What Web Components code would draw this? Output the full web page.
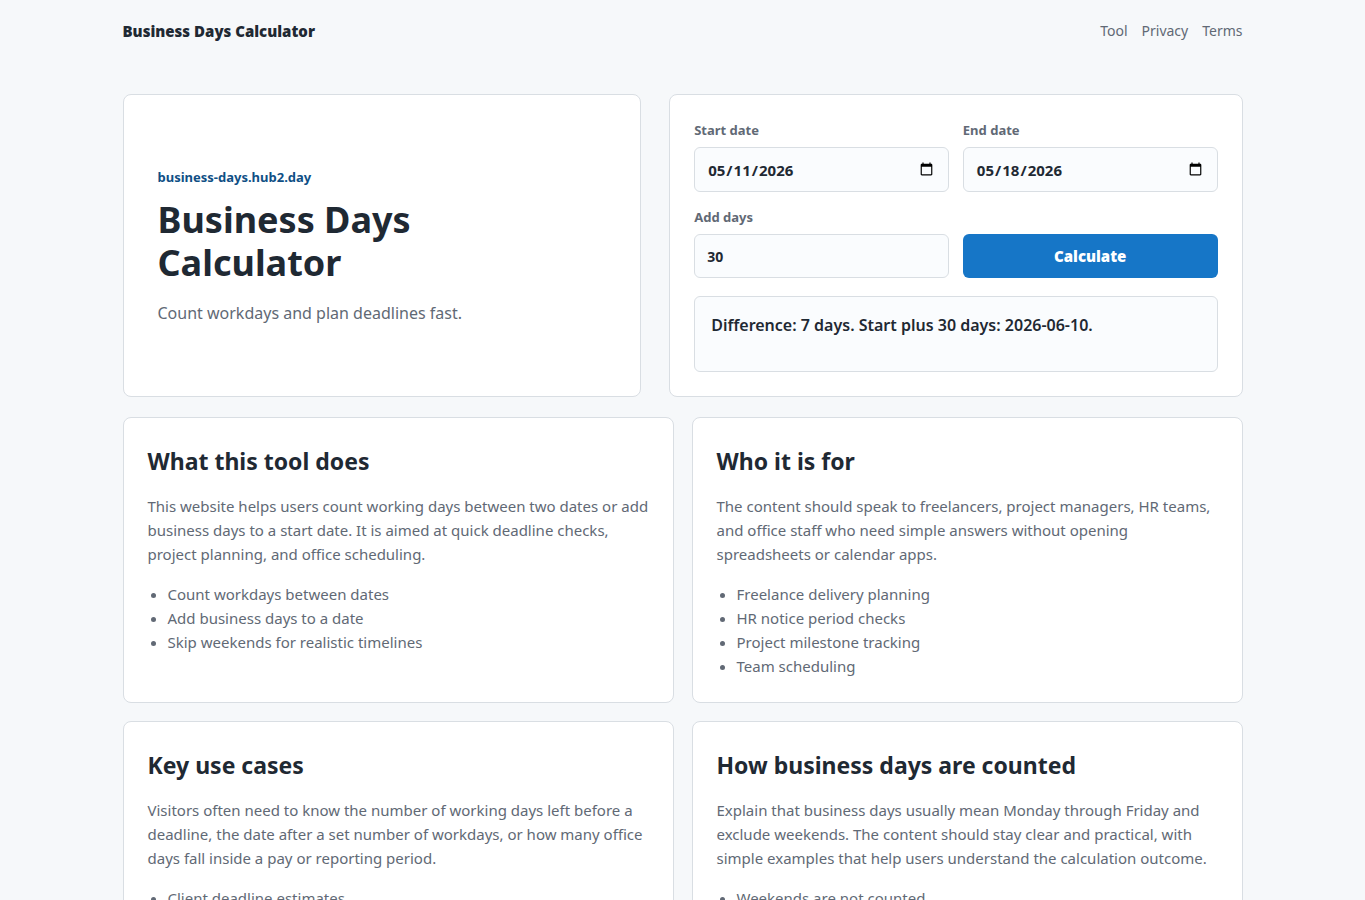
<!DOCTYPE html>
<html lang="en">
<head>
<meta charset="utf-8">
<meta name="viewport" content="width=device-width, initial-scale=1">
<title>Business Days Calculator</title>
<style>
  :root {
    --ink: #1f2933;
    --muted: #616975;
    --line: #d9dee3;
    --page: #f6f8fa;
    --field: #fafcfe;
    --accent: #1676c7;
    --accent-dark: #0f4f85;
  }
  body {
    margin: 0;
    background: var(--page);
    color: var(--ink);
    font: 15px/24px "Noto Sans", "Open Sans", sans-serif;
  }
</style>
</head>
<body>
<calc-page></calc-page>

<template id="calc-page">
  <style>
    :host { display: block; }
    main { width: min(1120px, 100% - 32px); margin: 0 auto; padding: 32px 0 48px; }
    .hero { display: grid; grid-template-columns: 19fr 21fr; gap: 28px; margin-bottom: 20px; }
    .sections { display: grid; grid-template-columns: 1fr 1fr; gap: 18px; }
    @media (max-width: 800px) {
      .hero, .sections { grid-template-columns: 1fr; }
    }
  </style>
  <site-header></site-header>
  <main>
    <div class="hero">
      <hero-card>
        <span slot="eyebrow">business-days.hub2.day</span>
        <span slot="title">Business Days Calculator</span>
        <span slot="lead">Count workdays and plan deadlines fast.</span>
      </hero-card>
      <days-form></days-form>
    </div>
    <div class="sections">
      <info-card>
        <span slot="title">What this tool does</span>
        <span slot="text">This website helps users count working days between two dates or add business days to a start date. It is aimed at quick deadline checks, project planning, and office scheduling.</span>
        <li>Count workdays between dates</li>
        <li>Add business days to a date</li>
        <li>Skip weekends for realistic timelines</li>
      </info-card>
      <info-card>
        <span slot="title">Who it is for</span>
        <span slot="text">The content should speak to freelancers, project managers, HR teams, and office staff who need simple answers without opening spreadsheets or calendar apps.</span>
        <li>Freelance delivery planning</li>
        <li>HR notice period checks</li>
        <li>Project milestone tracking</li>
        <li>Team scheduling</li>
      </info-card>
      <info-card>
        <span slot="title">Key use cases</span>
        <span slot="text">Visitors often need to know the number of working days left before a deadline, the date after a set number of workdays, or how many office days fall inside a pay or reporting period.</span>
        <li>Client deadline estimates</li>
      </info-card>
      <info-card>
        <span slot="title">How business days are counted</span>
        <span slot="text">Explain that business days usually mean Monday through Friday and exclude weekends. The content should stay clear and practical, with simple examples that help users understand the calculation outcome.</span>
        <li>Weekends are not counted</li>
      </info-card>
    </div>
  </main>
</template>

<template id="site-header">
  <style>
    :host { display: block; }
    header {
      display: flex; align-items: center; justify-content: space-between; gap: 16px;
      width: min(1120px, 100% - 32px); margin: 0 auto; padding: 19px 0;
    }
    .brand { color: var(--ink); font: 800 15px/24px "Open Sans", sans-serif; text-decoration: none; }
    nav { display: flex; gap: 14px; }
    nav a { color: var(--muted); font-size: 14px; text-decoration: none; }
  </style>
  <header>
    <a class="brand" href="#">Business Days Calculator</a>
    <nav>
      <a href="#tool">Tool</a>
      <a href="#privacy">Privacy</a>
      <a href="#terms">Terms</a>
    </nav>
  </header>
</template>

<template id="hero-card">
  <style>
    :host {
      display: flex; flex-direction: column; justify-content: center;
      box-sizing: border-box; padding: 34px;
      background: #fff; border: 1px solid var(--line); border-radius: 8px;
    }
    .eyebrow { margin: 0 0 10px; color: var(--accent-dark); font-size: 13px; line-height: 22px; font-weight: 700; }
    h1 { max-width: 400px; margin: 0 0 16px; font-size: 36px; line-height: 43px; font-weight: 700; }
    .lead { margin: 0; color: var(--muted); font-size: 16px; line-height: 26px; }
  </style>
  <p class="eyebrow"><slot name="eyebrow"></slot></p>
  <h1><slot name="title"></slot></h1>
  <p class="lead"><slot name="lead"></slot></p>
</template>

<template id="days-form">
  <style>
    :host {
      display: block; box-sizing: border-box; padding: 24px;
      background: #fff; border: 1px solid var(--line); border-radius: 8px;
    }
    form { display: grid; grid-template-columns: 1fr 1fr; gap: 14px; align-items: end; }
    .field { display: grid; gap: 6px; }
    label { color: var(--muted); font-size: 13px; line-height: 22px; font-weight: 700; }
    input {
      box-sizing: border-box; width: 100%; height: 44px; margin: 0; padding: 0 12px;
      font: 700 14px/22px "Noto Sans", sans-serif; color: var(--ink);
      background: var(--field); border: 1px solid var(--line); border-radius: 6px;
    }
    input[type="date"] { height: 45px; font-size: 15px; }
    input[type="number"] { appearance: textfield; }
    button {
      height: 44px; border: 0; border-radius: 6px; cursor: pointer;
      background: var(--accent); color: #fff; font: 900 15px/24px "Noto Sans", sans-serif;
    }
    output {
      display: block; box-sizing: border-box; min-height: 76px; margin-top: 18px; padding: 16px;
      background: var(--field); border: 1px solid var(--line); border-radius: 6px;
      font-size: 16px; font-weight: 600;
    }
  </style>
  <form id="tool">
    <div class="field"><label for="start">Start date</label><input id="start" type="date" value="2026-05-11"></div>
    <div class="field"><label for="end">End date</label><input id="end" type="date" value="2026-05-18"></div>
    <div class="field"><label for="add">Add days</label><input id="add" type="number" value="30"></div>
    <button type="submit">Calculate</button>
  </form>
  <output for="start end add">Difference: 7 days. Start plus 30 days: 2026-06-10.</output>
</template>

<template id="info-card">
  <style>
    :host {
      display: block; box-sizing: border-box; padding: 24px;
      background: #fff; border: 1px solid var(--line); border-radius: 8px;
    }
    h2 { margin: 0 0 14px; font-size: 23px; line-height: 38px; font-weight: 700; }
    p { margin: 0 0 16px; color: var(--muted); }
    ul { margin: 0; padding-left: 20px; color: var(--muted); }
  </style>
  <h2><slot name="title"></slot></h2>
  <p><slot name="text"></slot></p>
  <ul><slot></slot></ul>
</template>

<script>
  class TemplateElement extends HTMLElement {
    constructor() {
      super();
      const template = document.getElementById(this.localName);
      this.attachShadow({ mode: "open" }).append(template.content.cloneNode(true));
    }
  }

  class DaysForm extends TemplateElement {
    connectedCallback() {
      this.shadowRoot.querySelector("form").addEventListener("submit", (event) => {
        event.preventDefault();
        this.calculate();
      });
    }

    calculate() {
      const field = (id) => this.shadowRoot.getElementById(id);
      const start = field("start").valueAsDate;
      const end = field("end").valueAsDate;
      const add = Number(field("add").value);
      if (!start || !end) return;
      const difference = Math.round((end - start) / 86400000);
      const result = new Date(start);
      result.setUTCDate(result.getUTCDate() + add);
      this.shadowRoot.querySelector("output").textContent =
        `Difference: ${difference} days. Start plus ${add} days: ${result.toISOString().slice(0, 10)}.`;
    }
  }

  customElements.define("site-header", class extends TemplateElement {});
  customElements.define("hero-card", class extends TemplateElement {});
  customElements.define("days-form", DaysForm);
  customElements.define("info-card", class extends TemplateElement {});
  customElements.define("calc-page", class extends TemplateElement {});
</script>
</body>
</html>
